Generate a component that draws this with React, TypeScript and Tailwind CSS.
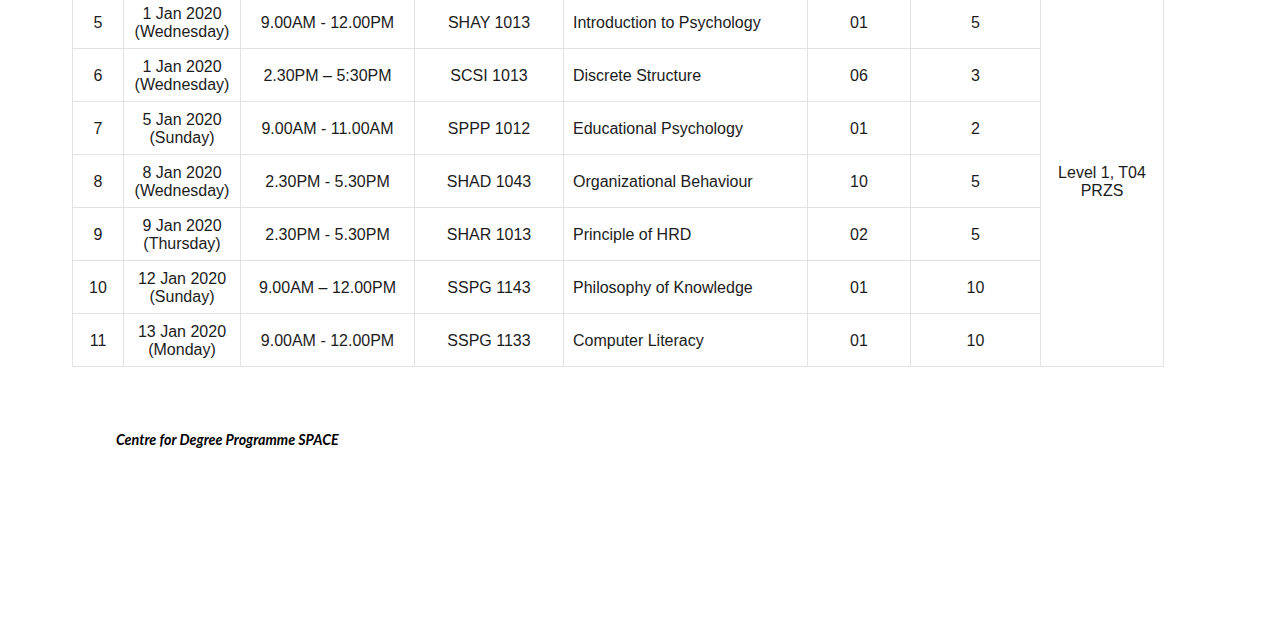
const rows = [
  { no: "5", date: "1 Jan 2020", day: "(Wednesday)", time: "9.00AM - 12.00PM", code: "SHAY 1013", name: "Introduction to Psychology", sec: "01", n: "5" },
  { no: "6", date: "1 Jan 2020", day: "(Wednesday)", time: "2.30PM \u2013 5:30PM", code: "SCSI 1013", name: "Discrete Structure", sec: "06", n: "3" },
  { no: "7", date: "5 Jan 2020", day: "(Sunday)", time: "9.00AM - 11.00AM", code: "SPPP 1012", name: "Educational Psychology", sec: "01", n: "2" },
  { no: "8", date: "8 Jan 2020", day: "(Wednesday)", time: "2.30PM - 5.30PM", code: "SHAD 1043", name: "Organizational Behaviour", sec: "10", n: "5" },
  { no: "9", date: "9 Jan 2020", day: "(Thursday)", time: "2.30PM - 5.30PM", code: "SHAR 1013", name: "Principle of HRD", sec: "02", n: "5" },
  { no: "10", date: "12 Jan 2020", day: "(Sunday)", time: "9.00AM \u2013 12.00PM", code: "SSPG 1143", name: "Philosophy of Knowledge", sec: "01", n: "10" },
  { no: "11", date: "13 Jan 2020", day: "(Monday)", time: "9.00AM - 12.00PM", code: "SSPG 1133", name: "Computer Literacy", sec: "01", n: "10" },
]

const cell = "border border-[#e2e2e2] text-center align-middle p-0 pt-[2px]"

const App = () => {
  return (
    <div className="w-[1280px] h-[640px] overflow-hidden bg-white font-['Liberation_Sans',Arial,sans-serif] text-[16px] text-[#1c1c1c]">
      <table className="ml-[72px] -mt-[5px] w-[1091px] table-fixed border-collapse leading-[18px]">
        <colgroup>
          <col className="w-[51px]" />
          <col className="w-[117px]" />
          <col className="w-[174px]" />
          <col className="w-[149px]" />
          <col className="w-[244px]" />
          <col className="w-[103px]" />
          <col className="w-[130px]" />
          <col className="w-[123px]" />
        </colgroup>
        <tbody>
          {rows.map((r, i) => (
            <tr key={r.no} className="h-[53px]">
              <td className={cell}>{r.no}</td>
              <td className={cell}>
                <div>{r.date}</div>
                <div>{r.day}</div>
              </td>
              <td className={cell}>{r.time}</td>
              <td className={cell}>{r.code}</td>
              <td className={`${cell} !text-left pl-[9px]`}>{r.name}</td>
              <td className={cell}>{r.sec}</td>
              <td className={cell}>{r.n}</td>
              {i === 0 && (
                <td rowSpan={7} className={cell}>
                  <div>Level 1, T04</div>
                  <div>PRZS</div>
                </td>
              )}
            </tr>
          ))}
        </tbody>
      </table>
      <p className="ml-[116px] mt-[62px] font-['Lato',sans-serif] font-bold italic text-[14.3px] text-black">
        Centre for Degree Programme SPACE
      </p>
    </div>
  )
}

export default App
